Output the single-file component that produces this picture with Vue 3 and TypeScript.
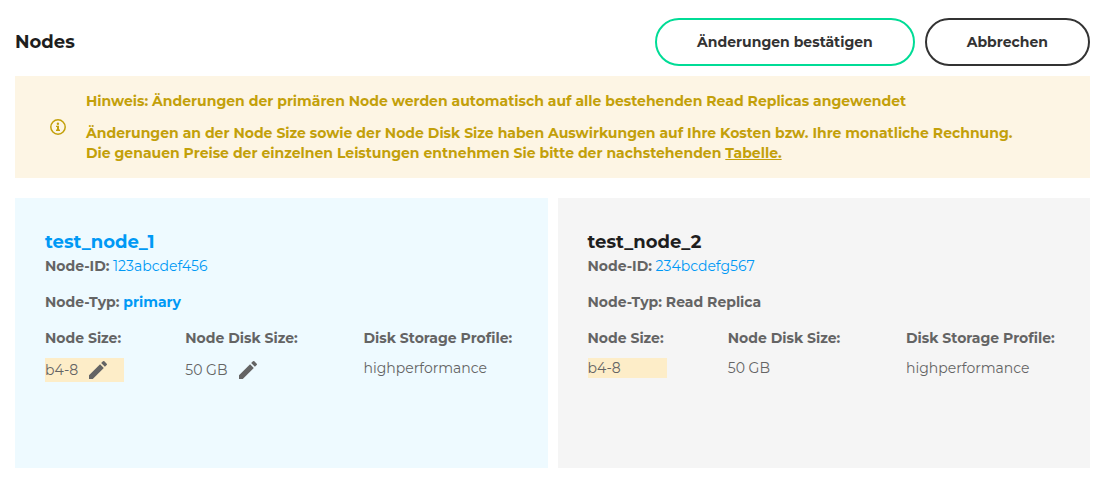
<script setup lang="ts">
interface ClusterNode {
  name: string
  id: string
  type: string
  size: string
  disk: string
  profile: string
  primary: boolean
}

const nodes: ClusterNode[] = [
  { name: 'test_node_1', id: '123abcdef456', type: 'primary', size: 'b4-8', disk: '50 GB', profile: 'highperformance', primary: true },
  { name: 'test_node_2', id: '234bcdefg567', type: 'Read Replica', size: 'b4-8', disk: '50 GB', profile: 'highperformance', primary: false },
]

const pencil =
  'M3 17.25V21h3.75L17.81 9.94l-3.75-3.75L3 17.25zM20.71 7.04a.996.996 0 0 0 0-1.41l-2.34-2.34a.996.996 0 0 0-1.41 0l-1.83 1.83 3.75 3.75 1.83-1.83z'
</script>

<template>
  <main class="page">
    <header class="header">
      <h1 class="heading">Nodes</h1>
      <div class="actions">
        <button type="button" class="button confirm">Änderungen bestätigen</button>
        <button type="button" class="button cancel">Abbrechen</button>
      </div>
    </header>

    <section class="notice">
      <svg class="notice-icon" viewBox="0 0 16 16" aria-hidden="true">
        <circle cx="8" cy="8" r="7.2" fill="none" stroke="currentColor" stroke-width="1.5" />
        <circle cx="7.9" cy="4.7" r="1.2" fill="currentColor" />
        <path d="M6 6.8h3v3.7h1v1.4H6v-1.4h1V8.1H6z" fill="currentColor" />
      </svg>
      <div class="notice-text">
        <p>Hinweis: Änderungen der primären Node werden automatisch auf alle bestehenden Read Replicas angewendet</p>
        <p>
          Änderungen an der Node Size sowie der Node Disk Size haben Auswirkungen auf Ihre Kosten bzw. Ihre monatliche Rechnung.<br />
          Die genauen Preise der einzelnen Leistungen entnehmen Sie bitte der nachstehenden <a href="#">Tabelle.</a>
        </p>
      </div>
    </section>

    <div class="cards">
      <article v-for="node in nodes" :key="node.id" class="card" :class="{ primary: node.primary }">
        <h2 class="name">{{ node.name }}</h2>
        <p class="line"><b>Node-ID:</b> <a href="#" class="id">{{ node.id }}</a></p>
        <p class="line type"><b>Node-Typ: <span class="type-value">{{ node.type }}</span></b></p>
        <dl class="specs">
          <div>
            <dt :id="`size-${node.id}`">Node Size:</dt>
            <dd class="changed">
              {{ node.size }}
              <button v-if="node.primary" type="button" class="edit" :aria-labelledby="`size-${node.id}`">
                <svg viewBox="0 0 24 24" aria-hidden="true"><path :d="pencil" fill="currentColor" /></svg>
              </button>
            </dd>
          </div>
          <div>
            <dt :id="`disk-${node.id}`">Node Disk Size:</dt>
            <dd>
              {{ node.disk }}
              <button v-if="node.primary" type="button" class="edit" :aria-labelledby="`disk-${node.id}`">
                <svg viewBox="0 0 24 24" aria-hidden="true"><path :d="pencil" fill="currentColor" /></svg>
              </button>
            </dd>
          </div>
          <div>
            <dt>Disk Storage Profile:</dt>
            <dd>{{ node.profile }}</dd>
          </div>
        </dl>
      </article>
    </div>
  </main>
</template>

<style>
body {
  margin: 0;
  background: #fff;
}
</style>

<style scoped>
.page {
  padding: 18px 15px 14px;
  font-family: Montserrat, Inter, "Liberation Sans", sans-serif;
  font-size: 14px;
  line-height: 20px;
  color: #646464;
}
h1, h2, p, dl, dd {
  margin: 0;
}
.header {
  display: flex;
  align-items: center;
  justify-content: space-between;
  margin-bottom: 10px;
}
.heading {
  font-size: 18px;
  line-height: 28px;
  font-weight: 700;
  color: #1e1e1e;
}
.actions {
  display: flex;
  gap: 10px;
}
.button {
  height: 48px;
  padding: 0 40px;
  border: 2px solid #333;
  border-radius: 24px;
  background: #fff;
  color: #333;
  font: inherit;
  font-weight: 700;
  cursor: pointer;
}
.confirm {
  border-color: #00dc96;
}
.notice {
  display: flex;
  align-items: center;
  gap: 20px;
  padding: 15px 20px 15px 35px;
  margin-bottom: 20px;
  background: #fdf5e4;
  color: #c3a00a;
  font-weight: 700;
}
.notice-icon {
  flex: none;
  width: 16px;
  height: 16px;
}
.notice-text {
  display: grid;
  gap: 12px;
}
.notice a {
  color: inherit;
}
.cards {
  display: grid;
  grid-template-columns: 1fr 1fr;
  gap: 10px;
}
.card {
  min-height: 210px;
  padding: 30px;
  background: #f5f5f5;
}
.card.primary {
  background: #eefaff;
}
.name {
  font-size: 18px;
  line-height: 28px;
  font-weight: 700;
  color: #1e1e1e;
}
.primary .name,
.primary .type-value,
.id {
  color: #0099f5;
}
.id {
  text-decoration: none;
}
.type {
  margin: 16px 0;
}
.specs {
  display: grid;
  grid-template-columns: 79px 117px 154px;
  justify-content: space-between;
}
dt {
  margin-bottom: 10px;
  font-weight: 700;
  white-space: nowrap;
}
dd {
  display: flex;
  align-items: center;
  gap: 8px;
}
.changed {
  background: #fdedc8;
}
.edit {
  width: 24px;
  height: 24px;
  padding: 0;
  border: 0;
  background: none;
  color: inherit;
  cursor: pointer;
}
.edit svg {
  display: block;
}
</style>
